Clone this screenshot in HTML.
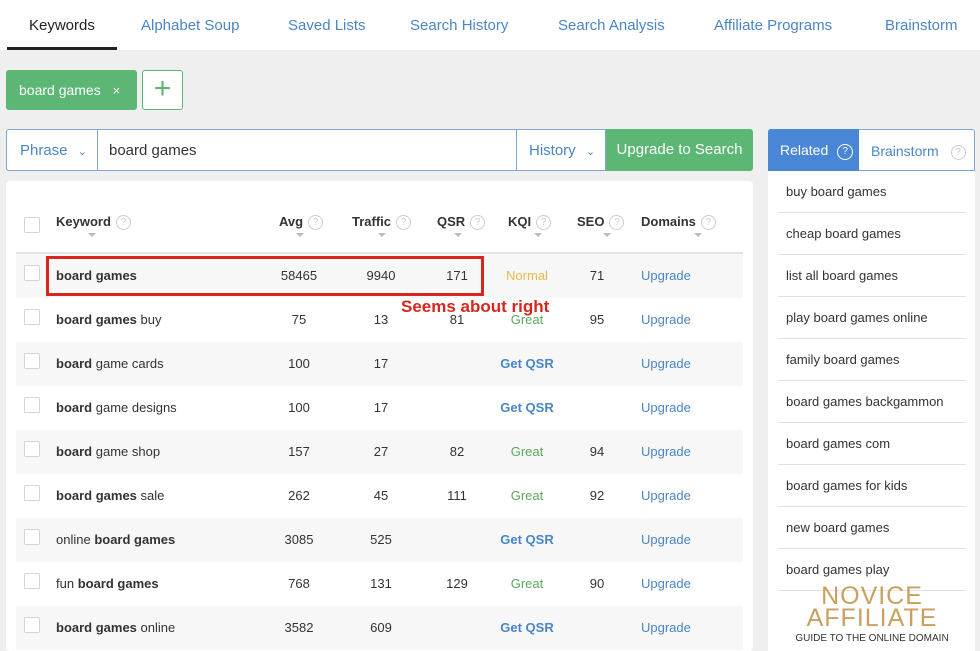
<!DOCTYPE html>
<html><head><meta charset="utf-8"><style>
*{box-sizing:border-box;margin:0;padding:0}
body{width:980px;height:649px;overflow:hidden;background:#efefef;font-family:"Liberation Sans",sans-serif;font-size:14px;color:#333;position:relative}
.a{position:absolute;white-space:nowrap}
.nav{position:absolute;left:0;top:0;width:980px;height:50px;background:#fff}
.nav span{position:absolute;top:17px;font-size:15px;color:#4a86c5}
.blue{color:#4a86c5}
.q{display:inline-block;width:15px;height:15px;border:1px solid #ccc;border-radius:50%;font-size:10px;color:#ccc;text-align:center;line-height:13px;vertical-align:1px;margin-left:5px;font-weight:normal}
.cb{position:absolute;left:24px;width:16px;height:16px;border:1px solid #d5d5d5;border-radius:2px;background:#fff}
.row{position:absolute;left:16px;width:727px;height:44px}
.g{background:#f7f7f7}
.c{position:absolute;text-align:center;width:80px;margin-left:-40px}
.rel{position:absolute;left:786px;font-size:13px;color:#333}
.sep{position:absolute;left:778px;width:188px;height:1px;background:#e3e3e3}
.car{position:absolute;width:0;height:0;border-left:4px solid transparent;border-right:4px solid transparent;border-top:4px solid #bbb}
</style></head><body>
<div class="nav">
<span style="left:29px;color:#222">Keywords</span>
<span style="left:141px">Alphabet Soup</span>
<span style="left:288px">Saved Lists</span>
<span style="left:410px">Search History</span>
<span style="left:558px">Search Analysis</span>
<span style="left:714px">Affiliate Programs</span>
<span style="left:885px">Brainstorm</span>
<div style="position:absolute;left:7px;top:47px;width:110px;height:3px;background:#222"></div>
</div>
<div class="a" style="left:6px;top:70px;width:131px;height:40px;background:#5cb774;border-radius:3px;color:#fff;font-size:14px;line-height:40px;padding-left:13px">board games <span style="margin-left:8px;font-size:13px">×</span></div>
<div class="a" style="left:142px;top:70px;width:41px;height:40px;border:1px solid #5cb774;border-radius:3px;background:#fff;color:#5cb774;font-size:30px;line-height:36px;text-align:center;font-weight:300">+</div>
<div class="a" style="left:6px;top:129px;width:600px;height:42px;border:1px solid #7fa6cf;border-radius:3px 0 0 3px;background:#fff"></div>
<div class="a" style="left:97px;top:129px;width:1px;height:42px;background:#7fa6cf"></div>
<div class="a" style="left:516px;top:129px;width:1px;height:42px;background:#7fa6cf"></div>
<div class="a blue" style="left:20px;top:142px;font-size:15px">Phrase <span style="font-size:11px;margin-left:6px">&#8964;</span></div>
<div class="a" style="left:109px;top:142px;font-size:15px;color:#333">board games</div>
<div class="a blue" style="left:529px;top:142px;font-size:15px">History <span style="font-size:11px;margin-left:6px">&#8964;</span></div>
<div class="a" style="left:606px;top:129px;width:147px;height:42px;background:#5cb774;border-radius:0 3px 3px 0;color:#fff;font-size:15px;line-height:42px;text-align:center">Upgrade to Search</div>
<div class="a" style="left:6px;top:181px;width:747px;height:470px;background:#fff;border-radius:4px"></div>
<div class="cb" style="top:217px"></div>
<div class="a" style="left:56px;top:214px;font-weight:bold;font-size:13px">Keyword<span class="q">?</span></div>
<div class="a" style="left:279px;top:214px;font-weight:bold;font-size:13px">Avg<span class="q">?</span></div>
<div class="a" style="left:352px;top:214px;font-weight:bold;font-size:13px">Traffic<span class="q">?</span></div>
<div class="a" style="left:437px;top:214px;font-weight:bold;font-size:13px">QSR<span class="q">?</span></div>
<div class="a" style="left:508px;top:214px;font-weight:bold;font-size:13px">KQI<span class="q">?</span></div>
<div class="a" style="left:577px;top:214px;font-weight:bold;font-size:13px">SEO<span class="q">?</span></div>
<div class="a" style="left:641px;top:214px;font-weight:bold;font-size:13px">Domains<span class="q">?</span></div>
<div class="car" style="left:88px;top:233px"></div><div class="car" style="left:296px;top:233px"></div><div class="car" style="left:378px;top:233px"></div><div class="car" style="left:454px;top:233px"></div><div class="car" style="left:34px;top:233px;display:none"></div><div class="car" style="left:534px;top:233px"></div><div class="car" style="left:603px;top:233px"></div><div class="car" style="left:694px;top:233px"></div>
<div class="a" style="left:16px;top:252px;width:727px;height:2px;background:#e2e2e2"></div>
<div class="row g" style="top:254px"></div>
<div class="row g" style="top:342px"></div>
<div class="row g" style="top:430px"></div>
<div class="row g" style="top:518px"></div>
<div class="row g" style="top:606px"></div>
<div id="rows"></div>
<div class="a" style="left:46px;top:256px;width:438px;height:40px;border:3px solid #d9261c"></div>
<div class="a" style="left:401px;top:297px;font-weight:bold;font-size:17px;color:#d9261c">Seems about right</div>
<div class="a" style="left:768px;top:129px;width:207px;height:42px;border:1px solid #7fa6cf;border-radius:3px 3px 0 0;background:#fff"></div>
<div class="a" style="left:768px;top:129px;width:91px;height:42px;background:#4a86d6;border-radius:3px 0 0 0;color:#fff;font-size:14px;line-height:42px;padding-left:12px">Related <span class="q" style="border-color:#fff;color:#fff;width:16px;height:16px">?</span></div>
<div class="a blue" style="left:871px;top:143px;font-size:14px">Brainstorm <span class="q" style="margin-left:8px">?</span></div>
<div class="a" style="left:768px;top:171px;width:207px;height:480px;background:#fff"></div>
<div class="rel" style="top:184px">buy board games</div><div class="sep" style="top:212px"></div>
<div class="rel" style="top:226px">cheap board games</div><div class="sep" style="top:254px"></div>
<div class="rel" style="top:268px">list all board games</div><div class="sep" style="top:296px"></div>
<div class="rel" style="top:310px">play board games online</div><div class="sep" style="top:338px"></div>
<div class="rel" style="top:352px">family board games</div><div class="sep" style="top:380px"></div>
<div class="rel" style="top:394px">board games backgammon</div><div class="sep" style="top:422px"></div>
<div class="rel" style="top:436px">board games com</div><div class="sep" style="top:464px"></div>
<div class="rel" style="top:478px">board games for kids</div><div class="sep" style="top:506px"></div>
<div class="rel" style="top:520px">new board games</div><div class="sep" style="top:548px"></div>
<div class="rel" style="top:562px">board games play</div><div class="sep" style="top:590px"></div>
<div class="a" style="left:778px;top:585px;width:188px;text-align:center;color:#c9a060;font-size:25px;line-height:22px;letter-spacing:1px">NOVICE<br>AFFILIATE</div>
<div class="a" style="left:778px;top:633px;width:188px;text-align:center;color:#333;font-size:10px">GUIDE TO THE ONLINE DOMAIN</div>
<script>
var d=[["<b>board games</b>","58465","9940","171","Normal","71"],
["<b>board games</b> buy","75","13","81","Great","95"],
["<b>board</b> game cards","100","17","","Q",""],
["<b>board</b> game designs","100","17","","Q",""],
["<b>board</b> game shop","157","27","82","Great","94"],
["<b>board games</b> sale","262","45","111","Great","92"],
["online <b>board games</b>","3085","525","","Q",""],
["fun <b>board games</b>","768","131","129","Great","90"],
["<b>board games</b> online","3582","609","","Q",""]];
var h="";d.forEach(function(r,i){var y=276+i*44;
h+='<div class="cb" style="top:'+(y-11)+'px"></div>';
h+='<div class="a" style="left:56px;top:'+(y-8)+'px;font-size:13px">'+r[0]+'</div>';
h+='<div class="a c" style="left:299px;top:'+(y-8)+'px;font-size:13px">'+r[1]+'</div>';
h+='<div class="a c" style="left:381px;top:'+(y-8)+'px;font-size:13px">'+r[2]+'</div>';
h+='<div class="a c" style="left:457px;top:'+(y-8)+'px;font-size:13px">'+r[3]+'</div>';
var k=r[4]=="Q"?'<b style="color:#4a86c5">Get QSR</b>':'<span style="color:'+(r[4]=="Normal"?"#e8b94a":"#5aaa5a")+'">'+r[4]+'</span>';
h+='<div class="a c" style="left:527px;top:'+(y-8)+'px;font-size:13px">'+k+'</div>';
h+='<div class="a c" style="left:597px;top:'+(y-8)+'px;font-size:13px">'+r[5]+'</div>';
h+='<div class="a blue" style="left:641px;top:'+(y-8)+'px;font-size:13px">Upgrade</div>';});
document.getElementById("rows").innerHTML=h;
</script>
</body></html>
